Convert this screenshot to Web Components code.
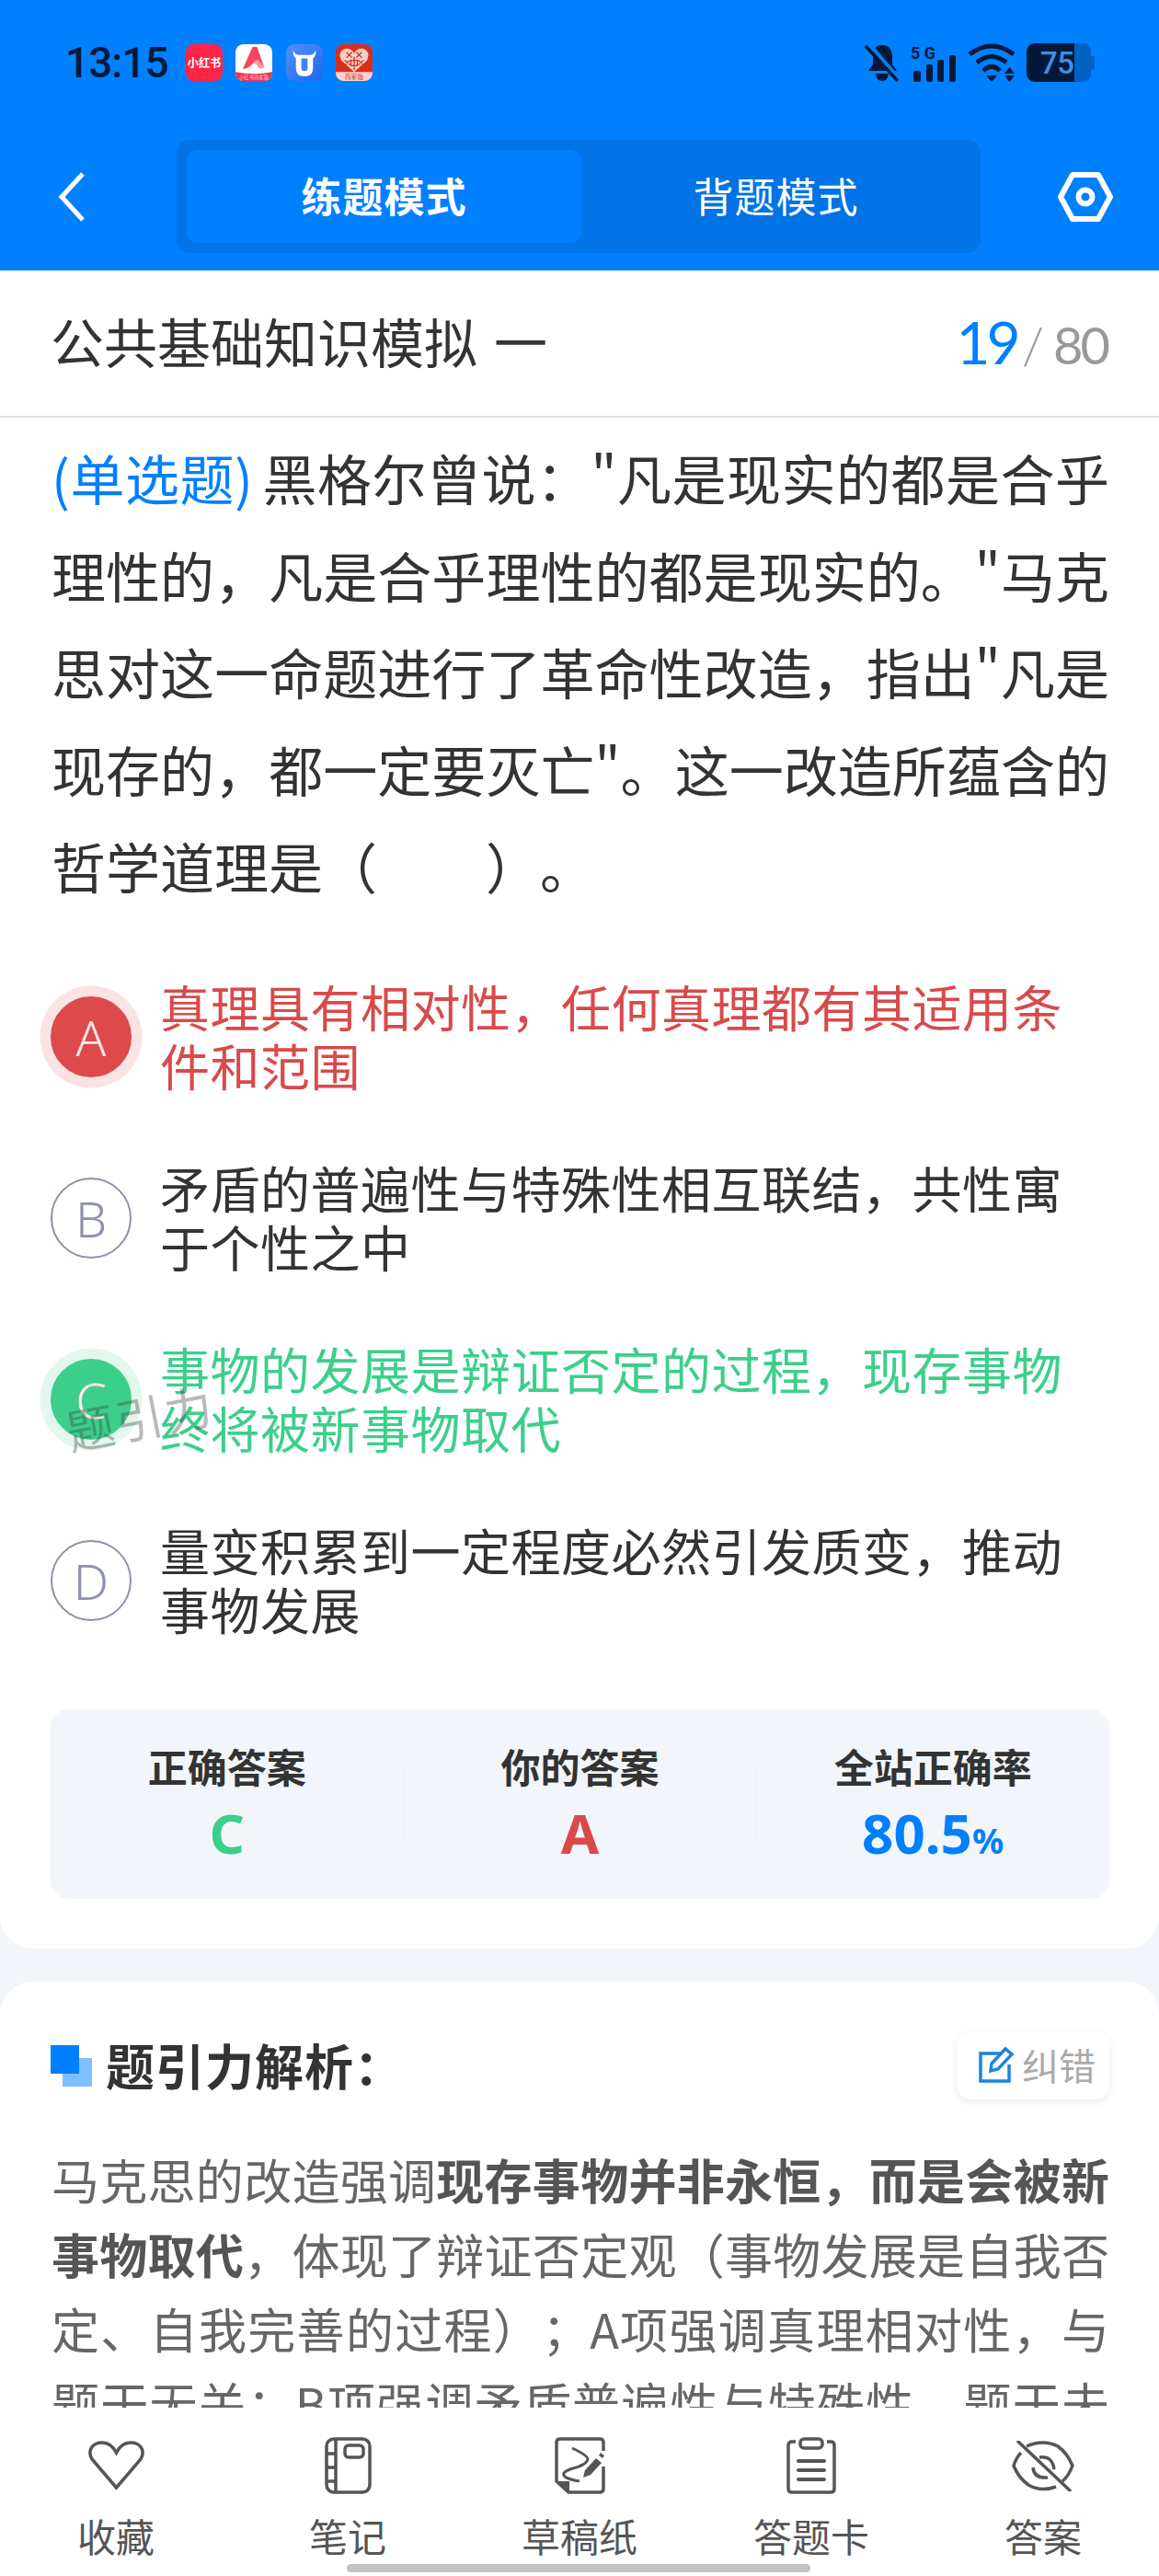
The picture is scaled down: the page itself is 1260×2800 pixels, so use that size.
<!DOCTYPE html>
<html lang="zh-CN">
<head>
<meta charset="utf-8">
<title>题引力</title>
<style>
  html, body { margin: 0; padding: 0; }
  body {
    width: 1260px;
    height: 2800px;
    overflow: hidden;
    background: #f2f6fa;
    font-family: "Noto Sans CJK SC", "Noto Sans", sans-serif;
    display: flex;
    flex-direction: column;
  }
</style>
</head>
<body>
  <app-header></app-header>
  <paper-title total="80" current="19">公共基础知识模拟 一</paper-title>
  <question-card></question-card>
  <analysis-card></analysis-card>
  <bottom-bar></bottom-bar>

<script>
// 顶部蓝色区域：状态栏 + 模式切换
class AppHeader extends HTMLElement {
  constructor() {
    super();
    this.attachShadow({ mode: 'open' });
  }
  connectedCallback() {
    this.shadowRoot.innerHTML = `
      <style>
        :host { display: block; height: 294px; background: #0080ff; flex: none; }
        .status { height: 152px; box-sizing: border-box; padding: 47px 70px 0 71px; display: flex; justify-content: space-between; align-items: flex-start; }
        .left { display: flex; align-items: center; gap: 14.500px; height: 42px; }
        .time { font: 500 46px/42px Roboto, "Noto Sans", sans-serif; color: #04193a; width: 116px; letter-spacing: -1px; flex: none; }
        .app { width: 40px; height: 40px; display: block; flex: none; }
        .right { display: flex; align-items: center; gap: 12px; height: 42px; }
        .right svg { display: block; flex: none; }
        .nav { display: flex; align-items: center; height: 123px; padding: 0 50px 0 59px; box-sizing: border-box; }
        .back { width: 34px; height: 56px; flex: none; }
        .seg { width: 874px; height: 123px; margin-left: 99px; box-sizing: border-box; padding: 11px; background: #0073e6; border-radius: 14px; display: flex; flex: none; }
        .tab { flex: 1; display: flex; align-items: center; justify-content: center; color: #fff; font-size: 44px; border-radius: 12px; letter-spacing: 1px; padding-bottom: 3px; }
        .tab.on { background: #0080ff; font-weight: 700; flex: none; width: 429px; }
        .gear { width: 60px; height: 54px; margin-left: auto; flex: none; }
      </style>
      <div class="status">
        <div class="left">
          <span class="time">13:15</span>
          <svg class="app" viewBox="0 0 41 41"><rect width="41" height="41" rx="9" fill="#fe2546"/><text x="20.500" y="25.500" text-anchor="middle" font-size="12.500" font-weight="700" fill="#fff" font-family="Noto Sans CJK SC">小红书</text></svg>
          <svg class="app" viewBox="0 0 41 41"><rect width="41" height="41" rx="9" fill="#fff"/><path d="M0 31Q20 35 41 31V32a9 9 0 0 1-9 9H9a9 9 0 0 1-9-9Z" fill="#ef2f4c"/><path d="M8 28 19 3h5l8 23-5 1-3-8q-3 0-5 3Q16 26 8 28Z" fill="#f2475f"/><path d="M19 21q3-4 7-3l6 8q-5 3-7-1-2-4-6-4Z" fill="#fa9aa4"/><text x="20.500" y="39" text-anchor="middle" font-size="5.500" fill="#ffd9de" font-family="Noto Sans CJK SC">小红书商家版</text></svg>
          <svg class="app" viewBox="0 0 41 41"><defs><linearGradient id="bl" x1="0" y1="0" x2="1" y2="1"><stop offset="0" stop-color="#4d92fb"/><stop offset="1" stop-color="#1f66f0"/></linearGradient></defs><rect width="41" height="41" rx="9" fill="url(#bl)"/><path d="M8 7q2 5 6 5h13q4 0 6-5 1 6-3 9v11q0 9-9.500 9T11 27V16q-4-3-3-9Z" fill="#fff"/><path d="M17 16h7v11q0 3-3.500 3T17 27Z" fill="#3f84f6"/></svg>
          <svg class="app" viewBox="0 0 41 41"><rect width="41" height="41" rx="9" fill="#d92d1e"/><path d="M20.500 31 6 18Q2 8 10 5q7-1 10.500 5Q24 4 31 5q8 3 4 13Z" fill="#f6cfc4"/><path d="M12 9l6 6m-6 0 6-6M23 9l6 6m-6 0 6-6M10 18l6 5m-6 0 6-5M25 18l6 5m-6 0 6-5M17 18h7v6h-7ZM20.500 14v15" stroke="#d92d1e" stroke-width="1.300" fill="none"/><path d="M0 31H41V32A9 9 0 0 1 32 41H9A9 9 0 0 1 0 32Z" fill="#fbd3cb"/><text x="20.500" y="39" text-anchor="middle" font-size="7" fill="#c8402f" font-family="Noto Sans CJK SC">商家版</text></svg>
        </div>
        <div class="right">
          <svg width="38" height="42" viewBox="0 0 38 42" fill="#04193a"><path d="M19 2c8 0 11 6 11 12v9l5 7H4l5-7v-9C9 8 11 2 19 2Z"/><path d="M12 33h14q-1 8-7 8t-7-8Z"/><path d="M4 0 38 39" stroke="#0080ff" stroke-width="4"/><path d="M1 3 36 41" stroke="#04193a" stroke-width="3.500"/></svg>
          <svg width="50" height="42" viewBox="0 0 50 42" fill="#04193a"><rect x="3" y="30" width="8" height="12" rx="2.500"/><rect x="17" y="23" width="7" height="19" rx="2.500"/><rect x="29" y="18" width="7" height="24" rx="2"/><rect x="42" y="13" width="7" height="29" rx="2"/><text x="0" y="17" font-size="18" font-weight="700" font-family="Roboto" textLength="27">5G</text></svg>
          <svg width="52" height="42" viewBox="0 0 52 42" fill="none" stroke="#04193a" stroke-width="5"><path d="M2 12Q26-6 50 12"/><path d="M10 21Q26 8 42 21"/><path d="M17 30Q26 21 35 30"/><path d="M20 35h12l-6 7Z" fill="#04193a" stroke="none"/><path d="M45.500 26l5.500 7H40ZM45.500 42l5.500-7H40Z" fill="#04193a" stroke="none"/></svg>
          <svg width="74" height="42" viewBox="0 0 74 42"><rect x="44" y="0" width="26" height="42" rx="8" fill="#0063c4"/><rect x="68" y="14" width="6" height="15" rx="2" fill="#0063c4"/><path d="M9 0H52V42H9a9 9 0 0 1-9-9V9a9 9 0 0 1 9-9Z" fill="#04193a"/><text x="15" y="33" font-size="33" font-weight="500" fill="#3f8fe8" font-family="Roboto" textLength="37">75</text></svg>
        </div>
      </div>
      <div class="nav">
        <svg class="back" viewBox="0 0 34 56" fill="none" stroke="#fff" stroke-width="5"><path d="M31 3 8 28l23 25"/></svg>
        <div class="seg"><div class="tab on">练题模式</div><div class="tab">背题模式</div></div>
        <svg class="gear" viewBox="0 0 60 54" fill="none" stroke="#fff" stroke-width="6" stroke-linejoin="round"><path d="M16 3h28l13 24-13 24H16L3 27Z"/><circle cx="30" cy="27" r="7.500"/></svg>
      </div>`;
  }
}

// 试卷标题行 + 题号
class PaperTitle extends HTMLElement {
  constructor() {
    super();
    this.attachShadow({ mode: 'open' });
  }
  connectedCallback() {
    this.shadowRoot.innerHTML = `
      <style>
        :host { display: flex; flex: none; height: 160px; background: #fff; border-bottom: 2px solid #e2e2e2; box-sizing: border-box; align-items: center; justify-content: space-between; padding: 0 56px 0 55px; }
        .name { font-size: 58px; color: #333; padding-bottom: 6px; word-spacing: 5px; }
        .num { font-family: Lato, "Noto Sans", sans-serif; font-size: 56px; color: #999; display: flex; align-items: baseline; letter-spacing: -3px; padding-bottom: 4px; }
        .num b { color: #0080ff; font-weight: 400; font-size: 64px; letter-spacing: -4px; }
        .num i { font-style: normal; margin: 0 10px 0 5px; letter-spacing: 0; font-weight: 300; }
      </style>
      <div class="name"><slot></slot></div>
      <div class="num"><b>${this.getAttribute('current')}</b><i>/</i>${this.getAttribute('total')}</div>`;
  }
}

// 单个选项，state: wrong / right / 空
class OptionItem extends HTMLElement {
  constructor() {
    super();
    this.attachShadow({ mode: 'open' });
  }
  connectedCallback() {
    const letter = this.getAttribute('letter');
    this.shadowRoot.innerHTML = `
      <style>
        :host { display: flex; align-items: center; gap: 31px; color: #333; --c: #8c92a8; --ring: transparent; }
        :host([state="wrong"]) { color: #d94a4b; --c: #de4a4c; --ring: #f9e3e3; }
        :host([state="right"]) { color: #3ccf8a; --c: #3ccf8a; --ring: #e2f8ec; }
        .dot { width: 88px; height: 88px; box-sizing: border-box; flex: none; border-radius: 50%; border: 2.500px solid var(--c); color: var(--c);
          display: flex; align-items: center; justify-content: center; font-family: "Noto Sans", sans-serif; font-size: 54px; font-weight: 300; }
        :host([state]) .dot { background: var(--c); color: #ffe8e8; box-shadow: 0 0 0 11.500px var(--ring); }
        .txt { font-size: 54px; line-height: 64px; letter-spacing: 0.500px; width: 1000px; margin-top: -3px; }
      </style>
      <div class="dot">${letter}</div>
      <div class="txt"><slot></slot></div>`;
  }
}

class QuestionCard extends HTMLElement {
  constructor() {
    super();
    this.attachShadow({ mode: 'open' });
  }
  connectedCallback() {
    this.shadowRoot.innerHTML = `
      <style>
        :host { display: block; flex: none; background: #fff; border-radius: 0 0 36px 36px; padding: 12px 54px 0 55px; height: 1664px; box-sizing: border-box; position: relative; }
        .q { font-size: 59px; line-height: 105.500px; color: #333; text-align: justify; text-spacing-trim: space-all; margin-left: 1px; }
        .q span { color: #0080ff; margin-right: 10px; }
        .opts { display: flex; flex-direction: column; gap: 72px; margin-top: 71px; }
        .stats { margin-top: 77.500px; height: 206px; background: #f2f6fa; border-radius: 20px; display: grid; grid-template-columns: repeat(3, 1fr); }
        .mark { position: absolute; left: 71px; top: 1050px; font-size: 52px; line-height: 72px; font-weight: 400; color: rgba(60,60,60,.36); transform: rotate(-11deg); letter-spacing: 2px; }
      </style>
      <div class="q"><span>(单选题)</span>黑格尔曾说："凡是现实的都是合乎理性的，凡是合乎理性的都是现实的。"马克思对这一命题进行了革命性改造，指出"凡是现存的，都一定要灭亡"。这一改造所蕴含的哲学道理是（　　）。</div>
      <div class="opts">
        <option-item letter="A" state="wrong">真理具有相对性，任何真理都有其适用条件和范围</option-item>
        <option-item letter="B">矛盾的普遍性与特殊性相互联结，共性寓于个性之中</option-item>
        <option-item letter="C" state="right">事物的发展是辩证否定的过程，现存事物终将被新事物取代</option-item>
        <option-item letter="D">量变积累到一定程度必然引发质变，推动事物发展</option-item>
      </div>
      <div class="stats">
        <stat-cell label="正确答案" value="C" color="#3ccf8a"></stat-cell>
        <stat-cell label="你的答案" value="A" color="#d94a4b" line></stat-cell>
        <stat-cell label="全站正确率" value="80.5" unit="%" color="#0080ff" line></stat-cell>
      </div>
      <div class="mark">题引力</div>`;
  }
}

class StatCell extends HTMLElement {
  constructor() {
    super();
    this.attachShadow({ mode: 'open' });
  }
  connectedCallback() {
    const unit = this.getAttribute('unit') || '';
    this.shadowRoot.innerHTML = `
      <style>
        :host { display: flex; flex-direction: column; align-items: center; position: relative; padding-top: 30px; color: #333; }
        :host([line])::before { content: ""; position: absolute; left: 0; top: 67px; height: 72px; width: 1px; background: #e8ecf0; }
        .l { font-size: 43px; font-weight: 700; line-height: 62px; }
        .v { font-family: "Noto Sans", sans-serif; font-size: 60px; font-weight: 700; line-height: 72px; margin-top: 6px; color: ${this.getAttribute('color')}; }
        .v small { font-size: 38px; }
      </style>
      <div class="l">${this.getAttribute('label')}</div>
      <div class="v">${this.getAttribute('value')}<small>${unit}</small></div>`;
  }
}

class AnalysisCard extends HTMLElement {
  constructor() {
    super();
    this.attachShadow({ mode: 'open' });
  }
  connectedCallback() {
    this.shadowRoot.innerHTML = `
      <style>
        :host { display: block; flex: none; margin-top: 36px; background: #fff; border-radius: 36px 36px 0 0; padding: 54px 54px 0 55px; height: 463px; box-sizing: border-box; overflow: hidden; }
        .head { display: flex; align-items: center; height: 74px; }
        .sq { width: 45px; height: 45px; flex: none; margin-right: 15px; }
        h2 { margin: 0 0 3px; font-size: 53px; font-weight: 700; color: #333; letter-spacing: 1px; }
        .fix { margin-left: auto; width: 166px; height: 74px; box-sizing: border-box; padding: 0 0 2px 24px; border-radius: 16px; background: #fff; box-shadow: 0 3px 8px rgba(0,0,0,.08); display: flex; align-items: center; gap: 7px; font-size: 40px; color: #aaa; }
        .fix svg { width: 40px; height: 40px; flex: none; }
        p { margin: 46px 0 0 1px; font-size: 52px; line-height: 81px; color: #666; text-align: justify; text-spacing-trim: space-all; }
        p b { color: #555; }
      </style>
      <div class="head">
        <svg class="sq" viewBox="0 0 45 45"><rect x="13" y="14" width="32" height="31" fill="#80bfff"/><rect width="31" height="31" fill="#0080ff"/></svg>
        <h2>题引力解析：</h2>
        <div class="fix"><svg viewBox="0 0 40 40" fill="none" stroke="#1b84e0" stroke-width="3.500"><path d="M24 8H2v30h31V20"/><path d="M13 27l1-8L29 3l7 6-15 16Z"/></svg>纠错</div>
      </div>
      <p>马克思的改造强调<b>现存事物并非永恒，而是会被新事物取代</b>，体现了辩证否定观（事物发展是自我否定、自我完善的过程）；A项强调真理相对性，与题干无关；B项强调矛盾普遍性与特殊性，题干未涉及。</p>`;
  }
}

// 底部工具栏
class BottomBar extends HTMLElement {
  constructor() {
    super();
    this.attachShadow({ mode: 'open' });
  }
  connectedCallback() {
    const items = [
      ['收藏', 63, 54, '<path d="M31.500 51 5 20C-1 9 7 2 16 2c7 0 12 4 15.500 11C35 6 40 2 47 2c9 0 17 7 11 18Z"/>'],
      ['笔记', 51, 62, '<rect x="2" y="2" width="47" height="58" rx="8"/><path d="M12 2v58M2 18h10M2 33h10M2 48h10"/><rect x="22" y="9" width="20" height="13" rx="4"/>'],
      ['草稿纸', 55, 62, '<path d="M53 15V6q0-4-4-4H6Q2 2 2 6V48L15 60H49q4 0 4-4V32"/><path d="M3 48H16V60Z" fill="#555" stroke="none"/><path d="M19 12Q36 20 36 24 35 30 20 34 6 38 11 43 15 46 27 48" stroke-width="3"/><path d="M45 23l6 5-12 13-8 3 2-8Z" fill="#555" stroke="none"/><path d="M48 20l2-3 4 3-2 3Z" fill="#555" stroke="none"/>'],
      ['答题卡', 54, 62, '<path d="M10 5H6Q2 5 2 9V56q0 4 4 4H48q4 0 4-4V9q0-4-4-4H44"/><rect x="15" y="2" width="24" height="10" rx="4"/><path d="M13 26H41M13 36H41M13 46H41" stroke-width="4" stroke-linecap="round"/>'],
      ['答案', 68, 55, '<path d="M7 1 63 54" stroke-linecap="round"/><path d="M16 6Q34-2 50 6 60 13 66 27 62 38 55 44"/><path d="M48 50Q32 56 18 48 7 40 2 27 5 18 10 13"/><path d="M30 18Q44 16 46 31"/><path d="M23 29Q24 41 39 40"/>'],
    ];
    this.shadowRoot.innerHTML = `
      <style>
        :host { display: grid; grid-template-columns: repeat(5, 252px); position: relative; flex: none; height: 183px; background: #fff; color: #555; }
        .it { display: flex; flex-direction: column; align-items: center; padding-top: 30px; }
        .ic { height: 66px; display: flex; align-items: center; }
        svg { display: block; }
        span { font-size: 42px; line-height: 50px; margin-top: 18px; }
        .home { position: absolute; left: 377px; width: 504px; top: 170px; height: 9px; border-radius: 5px; background: #c2c2c2; }
      </style>
      ${items.map(([t, w, h, d]) => `<div class="it"><div class="ic"><svg width="${w}" height="${h}" viewBox="0 0 ${w} ${h}" fill="none" stroke="#555" stroke-width="3.500">${d}</svg></div><span>${t}</span></div>`).join('')}
      <div class="home"></div>`;
  }
}

customElements.define('app-header', AppHeader);
customElements.define('paper-title', PaperTitle);
customElements.define('option-item', OptionItem);
customElements.define('stat-cell', StatCell);
customElements.define('question-card', QuestionCard);
customElements.define('analysis-card', AnalysisCard);
customElements.define('bottom-bar', BottomBar);
</script>
</body>
</html>
